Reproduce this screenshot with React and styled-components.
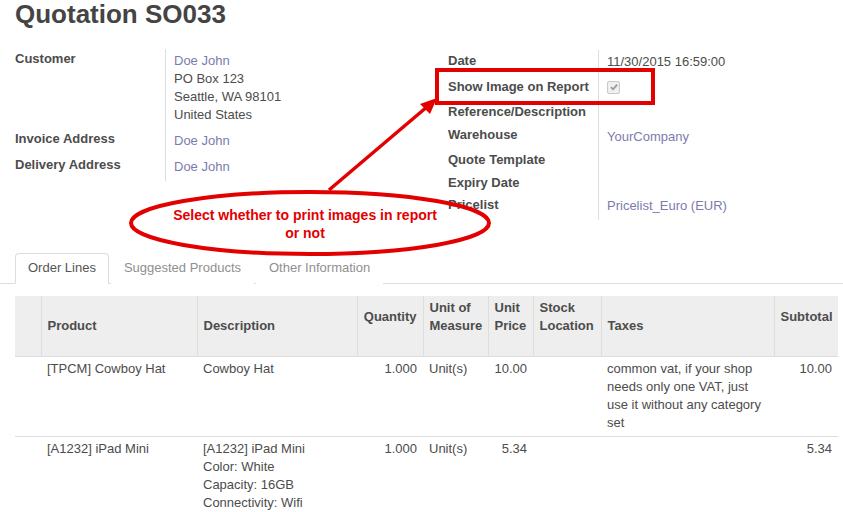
import React from 'react';
import styled, { createGlobalStyle } from 'styled-components';

const COLORS = {
  text: '#4c4c4c',
  link: '#7c7bad',
  border: '#dddddd',
  header: '#eeeeee',
  red: '#e30000',
};

const GlobalStyle = createGlobalStyle`
  html, body {
    margin: 0;
    padding: 0;
    overflow: hidden;
    background: #fff;
  }
  body {
    font-family: "Liberation Sans", Arial, sans-serif;
    font-size: 13px;
    line-height: 18px;
    color: ${COLORS.text};
  }
`;

const leftFields = [
  { label: 'Customer', h: 80, values: [{ text: 'Doe John', link: true }, { text: 'PO Box 123' }, { text: 'Seattle, WA 98101' }, { text: 'United States' }] },
  { label: 'Invoice Address', h: 26, values: [{ text: 'Doe John', link: true }] },
  { label: 'Delivery Address', h: 26, values: [{ text: 'Doe John', link: true }] },
];

const rightFields = [
  { label: 'Date', h: 26, pad: 3, values: [{ text: '11/30/2015 16:59:00' }] },
  { label: 'Show Image on Report', h: 25, pad: 3, checkbox: true },
  { label: 'Reference/Description', h: 23, pad: 2, values: [] },
  { label: 'Warehouse', h: 25, pad: 4, values: [{ text: 'YourCompany', link: true }] },
  { label: 'Quote Template', h: 23, pad: 2, values: [] },
  { label: 'Expiry Date', h: 22, pad: 2, values: [] },
  { label: 'Pricelist', h: 26, pad: 3, values: [{ text: 'Pricelist_Euro (EUR)', link: true }] },
];

const columns = [
  { key: 'handle', title: '', width: 26 },
  { key: 'product', title: 'Product', width: 156 },
  { key: 'description', title: 'Description', width: 160 },
  { key: 'qty', title: 'Quantity', width: 66, num: true },
  { key: 'uom', title: ['Unit of', 'Measure'], width: 65 },
  { key: 'price', title: ['Unit', 'Price'], width: 45 },
  { key: 'location', title: ['Stock', 'Location'], width: 68 },
  { key: 'taxes', title: 'Taxes', width: 173 },
  { key: 'subtotal', title: 'Subtotal', width: 64, num: true },
];

const lines = [
  {
    product: '[TPCM] Cowboy Hat',
    description: ['Cowboy Hat'],
    qty: '1.000',
    uom: 'Unit(s)',
    price: '10.00',
    taxes: 'common vat, if your shop needs only one VAT, just use it without any category set',
    subtotal: '10.00',
  },
  {
    product: '[A1232] iPad Mini',
    description: ['[A1232] iPad Mini', 'Color: White', 'Capacity: 16GB', 'Connectivity: Wifi'],
    qty: '1.000',
    uom: 'Unit(s)',
    price: '5.34',
    taxes: '',
    subtotal: '5.34',
  },
];

const App = () => {
  return (
    <>
      <GlobalStyle />
      <Sheet>
        <Title>Quotation SO033</Title>
        <Groups>
          <Group $width={433} $offset={1}>
            {leftFields.map((f) => (
              <FieldRow key={f.label} $h={f.h}>
                <Label $pad={1}>{f.label}</Label>
                <Value $pad={3}>
                  {f.values.map((v) => (
                    <ValueLine key={v.text} $link={v.link}>{v.text}</ValueLine>
                  ))}
                </Value>
              </FieldRow>
            ))}
          </Group>
          <Group $offset={2}>
            {rightFields.map((f) => (
              <FieldRow key={f.label} $h={f.h}>
                <Label $pad={2}>{f.label}</Label>
                <Value $pad={f.pad}>
                  {f.checkbox ? (
                    <CheckBox>
                      <svg width="10" height="10" viewBox="0 0 10 10">
                        <path d="M2 5.2 L4.1 7.3 L8.2 2.6" fill="none" stroke="#9a9a9a" strokeWidth="1.8" />
                      </svg>
                    </CheckBox>
                  ) : (
                    f.values.map((v) => (
                      <ValueLine key={v.text} $link={v.link}>{v.text}</ValueLine>
                    ))
                  )}
                </Value>
              </FieldRow>
            ))}
          </Group>
        </Groups>

        <TabBar>
          <Tab $active>Order Lines</Tab>
          <Tab>Suggested Products</Tab>
          <Tab>Other Information</Tab>
        </TabBar>

        <TableWrap>
          <Table>
            <colgroup>
              {columns.map((c) => (
                <col key={c.key} style={{ width: c.width }} />
              ))}
            </colgroup>
            <thead>
              <tr>
                {columns.map((c) => (
                  <Th key={c.key} $num={c.num}>
                    {Array.isArray(c.title)
                      ? c.title.map((t) => <div key={t}>{t}</div>)
                      : c.title}
                  </Th>
                ))}
              </tr>
            </thead>
            <tbody>
              {lines.map((l) => (
                <tr key={l.product}>
                  <Td />
                  <Td>{l.product}</Td>
                  <Td>
                    {l.description.map((d) => (
                      <div key={d}>{d}</div>
                    ))}
                  </Td>
                  <Td $num>{l.qty}</Td>
                  <Td>{l.uom}</Td>
                  <Td $num>{l.price}</Td>
                  <Td />
                  <Td>{l.taxes}</Td>
                  <Td $num>{l.subtotal}</Td>
                </tr>
              ))}
            </tbody>
          </Table>
        </TableWrap>

        <Overlay width="843" height="512" viewBox="0 0 843 512">
          <rect x="437" y="70" width="216" height="33" fill="none" stroke={COLORS.red} strokeWidth="4" />
          <line x1="329" y1="190" x2="428" y2="106" stroke={COLORS.red} strokeWidth="3.5" />
          <polygon points="437,98 420,104 430,114" fill={COLORS.red} />
          <ellipse cx="310" cy="223" rx="179" ry="31" fill="none" stroke={COLORS.red} strokeWidth="4" />
        </Overlay>
        <Callout>
          Select whether to print images in report
          <br />
          or not
        </Callout>
      </Sheet>
    </>
  );
};

const Sheet = styled.div`
  position: relative;
  width: 843px;
  height: 512px;
  overflow: hidden;
`;

const Title = styled.h1`
  margin: 0;
  padding-left: 15px;
  font-size: 26px;
  line-height: 29px;
  font-weight: bold;
  color: #444;
`;

const Groups = styled.div`
  display: flex;
  align-items: flex-start;
  margin-top: 19px;
  padding-left: 15px;
`;

const Group = styled.div`
  display: flex;
  flex-direction: column;
  width: ${({ $width }) => ($width ? `${$width}px` : 'auto')};
  flex: ${({ $width }) => ($width ? 'none' : '1')};
  margin-top: ${({ $offset }) => $offset}px;
`;

const FieldRow = styled.div`
  display: grid;
  grid-template-columns: 150px 1fr;
  height: ${({ $h }) => $h}px;
`;

const Label = styled.div`
  padding-top: ${({ $pad }) => $pad}px;
  font-weight: bold;
  color: ${COLORS.text};
  white-space: nowrap;
`;

const Value = styled.div`
  border-left: 1px solid ${COLORS.border};
  padding-top: ${({ $pad }) => $pad}px;
  padding-left: 8px;
`;

const ValueLine = styled.div`
  color: ${({ $link }) => ($link ? COLORS.link : COLORS.text)};
`;

const CheckBox = styled.span`
  display: inline-flex;
  align-items: center;
  justify-content: center;
  width: 11px;
  height: 11px;
  border: 1px solid #c8c8c8;
  border-radius: 2px;
  background: #efefef;
`;

const TabBar = styled.div`
  display: flex;
  margin-top: 33px;
  padding-left: 15px;
  border-bottom: 1px solid ${COLORS.border};
`;

const Tab = styled.div`
  height: 31px;
  box-sizing: border-box;
  padding: 5px 12px 0;
  margin-right: 2px;
  margin-bottom: -1px;
  border: 1px solid ${({ $active }) => ($active ? COLORS.border : 'transparent')};
  border-bottom-color: ${({ $active }) => ($active ? '#fff' : 'transparent')};
  border-radius: 4px 4px 0 0;
  background: #fff;
  color: ${({ $active }) => ($active ? '#555' : '#8f8f8f')};
`;

const TableWrap = styled.div`
  padding: 12px 5px 0 15px;
`;

const Table = styled.table`
  width: 823px;
  table-layout: fixed;
  border-collapse: collapse;
`;

const Th = styled.th`
  height: 60px;
  box-sizing: border-box;
  padding: 0 6px ${({ $num }) => ($num ? 30 : 21)}px 6px;
  background: ${COLORS.header};
  border-left: 1px solid ${COLORS.border};
  border-bottom: 1px solid ${COLORS.border};
  vertical-align: bottom;
  text-align: ${({ $num }) => ($num ? 'right' : 'left')};
  font-weight: bold;
  color: ${COLORS.text};
  &:first-child {
    border-left: none;
  }
`;

const Td = styled.td`
  padding: 3px 6px 4px 6px;
  vertical-align: top;
  text-align: ${({ $num }) => ($num ? 'right' : 'left')};
  border-bottom: 1px solid ${COLORS.border};
  color: ${COLORS.text};
`;

const Overlay = styled.svg`
  position: absolute;
  left: 0;
  top: 0;
  pointer-events: none;
`;

const Callout = styled.div`
  position: absolute;
  left: 150px;
  top: 206px;
  width: 310px;
  text-align: center;
  font-size: 14px;
  line-height: 18px;
  font-weight: bold;
  color: ${COLORS.red};
`;

export default App;
